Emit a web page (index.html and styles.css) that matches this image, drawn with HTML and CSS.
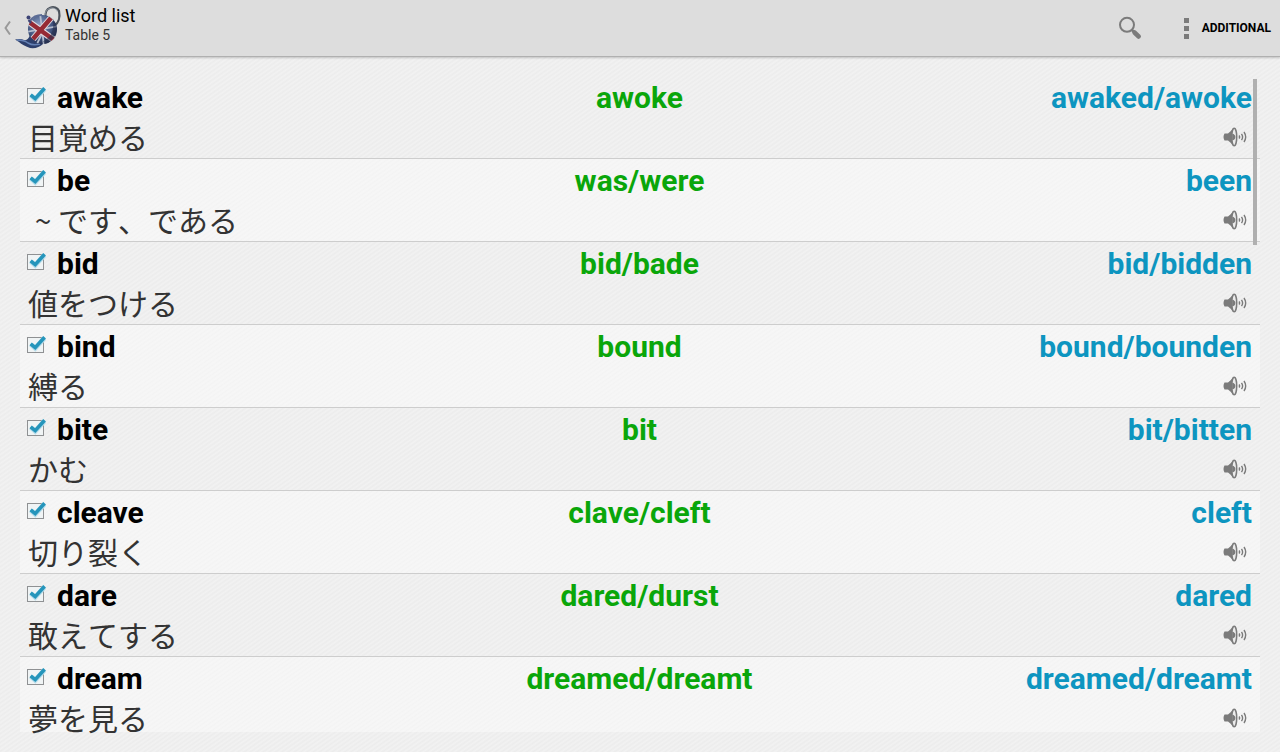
FILE: index.html
```html
<!DOCTYPE html>
<html lang="en">
<head>
  <meta charset="UTF-8" />
  <meta name="viewport" content="width=device-width, initial-scale=1.0" />
  <title>Word list</title>
  <link rel="stylesheet" href="styles.css">
</head>
<body>
  <svg class="sprite" width="0" height="0">
    <symbol id="check" viewBox="0 0 22 20">
      <rect x="1.5" y="3.5" width="16" height="15" fill="#f0f4f5" stroke="#8f9193" />
      <path d="M5 10.5 9.2 14.3 18.3 4.2" fill="none" stroke="#b5dcea" stroke-width="5" />
      <path d="M4.6 9.8 9.2 13.6 18.6 3.2" fill="none" stroke="#2595bb" stroke-width="3.6" />
    </symbol>
    <symbol id="speaker" viewBox="0 0 24 20">
      <path d="M1.5 6.5h3.5Q8 4.5 10.5.8v18.4Q8 15.5 5 13.5H1.5Q-.5 10 1.5 6.5z" fill="#7b7b7b" />
      <ellipse cx="11.2" cy="10" rx="2.5" ry="8.8" fill="#ececec" stroke="#7b7b7b" stroke-width="1.5" />
      <path d="M9.2 6.5Q12.4 7.5 12.4 10 12.4 12.500 9.2 13.5z" fill="#7b7b7b" />
      <path d="M16 8.500q1.200 1.500 0 3M18.500 6.800q2.200 3.200 0 6.400M21 5q3.400 5 0 10" fill="none" stroke="#7b7b7b" stroke-width="1.400" />
    </symbol>
  </svg>

  <header class="action-bar">
    <svg class="back" width="8" height="16" viewBox="0 0 8 16"><path d="M7 1.5Q4.500 5 2.500 8 4.500 11 7 14.5" fill="none" stroke="#999" stroke-width="2" /></svg>
    <svg class="logo" width="48" height="48" viewBox="0 0 48 48">
      <defs>
        <radialGradient id="pot" cx="40%" cy="35%" r="70%">
          <stop offset="0" stop-color="#8fa3c8" />
          <stop offset=".6" stop-color="#435681" />
          <stop offset="1" stop-color="#20294b" />
        </radialGradient>
        <clipPath id="pot-clip"><circle cx="28.5" cy="26.5" r="14.5" /></clipPath>
      </defs>
      <path d="M32 15C29 4 42 1 45 8 46.5 15 44 20 41 22" fill="none" stroke="#4c535c" stroke-width="2.2" />
      <path d="M31 12C31 5 41 2 43.5 9" fill="none" stroke="#a5afb9" stroke-width=".8" />
      <path d="M1 36.5Q7 35.5 10 37 14 38 16 32L29 41Q24 46 16 45 8 42 5 39z" fill="#2d3f6c" />
      <path d="M3 37Q10 37 14 40 19 43 26 41" fill="none" stroke="#6581b4" stroke-width="1.5" />
      <circle cx="28.5" cy="26.5" r="14.5" fill="url(#pot)" />
      <g clip-path="url(#pot-clip)">
        <path d="M15 17 42 39M37 12 22 43M12 29 45 23M26 10 30 43" stroke="#b5bdce" stroke-width="1.8" />
        <path d="M15 19 40 37M37 15 19 36" stroke="#e0dadf" stroke-width="6.5" />
        <path d="M15 19 40 37M37 15 19 36" stroke="#962a35" stroke-width="4.5" />
        <path d="M41 18Q43 34 30 40" fill="none" stroke="#26304f" stroke-width="4" opacity=".6" />
      </g>
      <path d="M16 18Q20 12 28 12" fill="none" stroke="#5d6d96" stroke-width="2" />
      <circle cx="14.5" cy="14.5" r="2" fill="#3d4476" />
      <path d="M14.5 17 17 20" stroke="#3d4476" stroke-width="2" />
    </svg>
    <div class="titles">
      <h1>Word list</h1>
      <p>Table 5</p>
    </div>
    <svg class="search" width="24" height="24" viewBox="0 0 24 24">
      <circle cx="9" cy="8.8" r="7" fill="none" stroke="#7b7b7b" stroke-width="2" />
      <path d="M13.5 13.5 17 17" stroke="#7b7b7b" stroke-width="2.5" />
      <path d="M16.5 16.5 20.7 20.5" stroke="#7b7b7b" stroke-width="4.5" stroke-linecap="round" />
    </svg>
    <button class="menu">
      <span class="dots"><i></i><i></i><i></i></span>
      ADDITIONAL
    </button>
  </header>

  <main class="word-list" id="word-list"></main>
  <div class="scrollbar"></div>

  <script>
    const words = [
      ["awake", "awoke", "awaked/awoke", "目覚める"],
      ["be", "was/were", "been", "<span class=\"tilde\">~</span>です、である"],
      ["bid", "bid/bade", "bid/bidden", "値をつける"],
      ["bind", "bound", "bound/bounden", "縛る"],
      ["bite", "bit", "bit/bitten", "かむ"],
      ["cleave", "clave/cleft", "cleft", "切り裂く"],
      ["dare", "dared/durst", "dared", "敢えてする"],
      ["dream", "dreamed/dreamt", "dreamed/dreamt", "夢を見る"]
    ];

    document.getElementById("word-list").innerHTML = words.map(([base, past, participle, translation]) => `
      <section class="word">
        <div class="forms">
          <div class="base"><svg class="check" width="22" height="20"><use href="#check" /></svg><span>${base}</span></div>
          <div class="past">${past}</div>
          <div class="participle">${participle}</div>
        </div>
        <div class="details">
          <p lang="ja">${translation}</p>
          <svg class="speaker" width="24" height="20"><use href="#speaker" /></svg>
        </div>
      </section>`).join("");
  </script>
</body>
</html>
```
FILE: styles.css
```css
* { box-sizing: border-box; }
body {
  margin: 0;
  height: 752px;
  overflow: hidden;
  font-family: Roboto, "Noto Sans CJK JP", sans-serif;
  background: repeating-linear-gradient(145deg, #ececec 0, #f2f2f2 1.8px, #ececec 3.6px);
}
h1, p { margin: 0; font-weight: normal; }
.sprite { display: none; }
.action-bar {
  display: flex;
  align-items: center;
  height: 57px;
  padding: 0 9px 0 3px;
  background: #ddd;
  border-bottom: 1px solid #b0b0b0;
  box-shadow: 0 1px 2px rgba(0,0,0,0.2);
}
.back { margin-right: 3px; }
.logo { margin-top: -2px; }
.titles { margin: -6px auto 0 3px; }
.titles h1 { margin-top: -1px; font-size: 18px; line-height: 21px; color: #000; }
.titles p { margin-top: 1px; font-size: 14px; line-height: 17px; color: #333; }
.search { margin-right: 42px; }
.menu {
  display: flex;
  align-items: center;
  gap: 13px;
  padding: 0;
  border: none;
  background: none;
  font: bold 12px Roboto, sans-serif;
  color: #000;
}
.dots { display: grid; gap: 3px; }
.dots i { width: 5px; height: 5px; background: #7b7b7b; }
.word-list {
  height: 656px;
  margin: 19px 20px 20px;
}
.word {
  height: 83px;
  padding: 4px 8px 0;
  border-bottom: 1px solid #cdcdcd;
}
.word:nth-child(even) { background: rgba(255,255,255,0.4); }
.word:last-child { height: 75px; border-bottom: none; }
.forms {
  display: grid;
  grid-template-columns: 1fr auto 1fr;
  height: 36px;
  font-size: 30px;
  font-weight: bold;
  line-height: 36px;
}
.base { display: flex; color: #000; }
.check { margin: 5px 9px 0 -2px; }
.past { padding-right: 1px; color: #0aa60a; }
.participle { text-align: right; color: #0d95c0; }
.details {
  display: flex;
  justify-content: space-between;
  height: 35px;
  font-size: 30px;
  line-height: 30px;
  color: #333;
}
.details p {
  padding-top: 5px;
  font-family: "Noto Sans CJK JP", sans-serif;
  font-kerning: none;
  font-feature-settings: "chws" 0;
  text-spacing-trim: space-all;
}
.tilde { display: inline-block; width: 30px; text-align: center; }
.speaker { margin: 11px 5px 0 0; }
.scrollbar {
  position: absolute;
  top: 79px;
  right: 23px;
  width: 4px;
  height: 166px;
  background: #b0b0b0;
}
```
